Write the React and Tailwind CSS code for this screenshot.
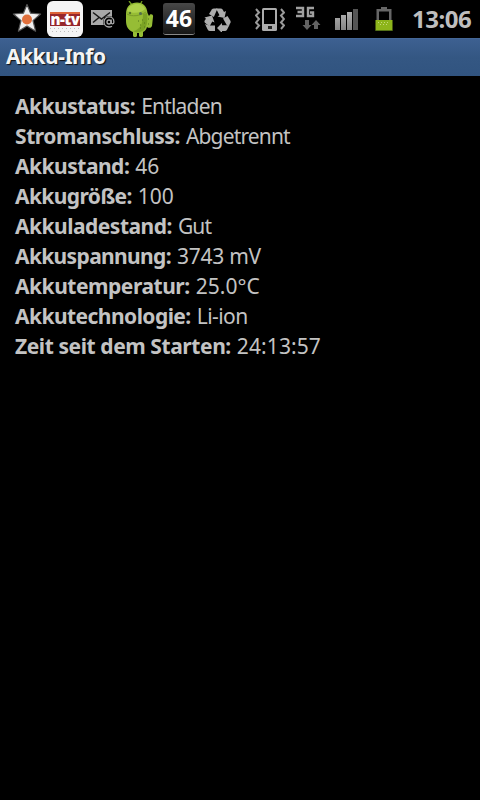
import React from 'react';

const rows = [
  { label: 'Akkustatus:', value: 'Entladen', labelClass: 'tracking-[-0.5px]', valueClass: 'tracking-[-0.8px]' },
  { label: 'Stromanschluss:', value: 'Abgetrennt', labelClass: 'tracking-[-0.43px]', valueClass: 'tracking-[-0.85px]' },
  { label: 'Akkustand:', value: '46', labelClass: 'tracking-[-0.5px]', valueClass: 'tracking-normal' },
  { label: 'Akkugröße:', value: '100', labelClass: 'tracking-[-0.6px]', valueClass: 'tracking-normal' },
  { label: 'Akkuladestand:', value: 'Gut', labelClass: 'tracking-[-0.5px]', valueClass: 'tracking-[-0.9px]' },
  { label: 'Akkuspannung:', value: '3743 mV', labelClass: 'tracking-[-0.65px]', valueClass: 'tracking-[-0.25px]' },
  { label: 'Akkutemperatur:', value: '25.0°C', labelClass: 'tracking-[-0.47px]', valueClass: 'tracking-[0.05px]' },
  { label: 'Akkutechnologie:', value: 'Li-ion', labelClass: 'tracking-[-0.55px]', valueClass: 'tracking-[-0.55px]' },
  { label: 'Zeit seit dem Starten:', value: '24:13:57', labelClass: 'tracking-[-0.42px]', valueClass: 'tracking-[0.1px]' },
];

const StarIcon = () => (
  <svg className="h-[30px] w-[30px]" viewBox="0 0 30 30">
    <path d="M15 1.5l3.600 8.700 10 .8-7.600 6.600 2.600 10.600L15 23l-8.600 5.200L9 17.600 1.400 11l10-.8z" fill="#f0f0f0" stroke="#555" strokeWidth="1.2" strokeLinejoin="round" />
    <circle cx="15" cy="16.500" r="5" fill="#e0703c" />
  </svg>
);

const NtvIcon = () => (
  <div className="h-9 w-9 overflow-hidden rounded-md bg-[#f4f4f4] pt-[11px]">
    <div className="mx-[3px] flex h-[14px] items-center justify-center border-t-2 border-[#dd6338] bg-[#96262b] text-[15px] leading-[12px] font-black tracking-[-0.5px] whitespace-nowrap text-white">
      <span className="-mt-[2px]">n-tv</span>
    </div>
    <svg className="ml-[3px] block h-[8px] w-[30px]" viewBox="0 0 30 8">
      <path d="M0 2.500h30M2 5.500h28" stroke="#bdbdbd" strokeDasharray="1 3" />
    </svg>
  </div>
);

const MailIcon = () => (
  <svg className="h-5 w-6" viewBox="0 0 24 20">
    <path d="M0 1h21v15H0z" fill="#a9a9a9" />
    <path d="M2 3.5l8.5 6.5L19 3.500M2 13.500l6-5M13 8.500l3 2" fill="none" stroke="#191919" strokeWidth="1.500" />
    <circle cx="18" cy="13" r="6" fill="#000" />
    <circle cx="18" cy="13" r="2" fill="none" stroke="#aaa" strokeWidth="1.3" />
    <path d="M20.2 10.5v3c0 2 2.7 1.8 2.7-.6 0-3-2.2-5-4.9-5s-5 2.200-5 5.100 2.300 5 5 5c1.200 0 2.200-.3 3-.8" fill="none" stroke="#aaa" strokeWidth="1.3" />
  </svg>
);

const DroidIcon = () => (
  <svg className="h-9 w-[29px]" viewBox="0 0 29 36">
    <path d="M4 0l3 4M17 0l-2 4" stroke="#6f9a1e" strokeWidth="1.300" />
    <path d="M1 13C1 5 6 1.500 12 1.500c6 0 10 4 10.500 10.500l1.500 3 1-1.500c2-1 3.500.5 3 2.500l-1 9c-1 2-3 2.500-5 1-1 3-2 4-4 5v3.500c0 2-4 2-4 0V32h-2v2.500c0 2-4 2-4 0V31C3 29 1 25 1 20z" fill="#96bd35" />
    <path d="M2 10c2-5 5-7 10-7 4 0 7 2 8 5-3 4-12 5-18 2z" fill="#aed04b" />
    <path d="M22 12c1 8 0 13-3 17-4 3-8 3-11 1 7-1 10-7 10-17z" fill="#7ba324" />
    <path d="M2 13c5 3 13 2 19-2" fill="none" stroke="#7a9b29" />
    <circle cx="5" cy="12" r="1.200" fill="#56732c" />
    <circle cx="15.500" cy="12.500" r="1.500" fill="#53704d" />
    <path d="M13 20h1m3-1h1m-3 5h1m3-2h1m3-4h1m-9 9h1m3-1h1m3-3h1" stroke="#53751a" />
  </svg>
);

const RecycleIcon = () => (
  <svg className="h-6 w-[27px]" viewBox="0 0 27 24">
    <g fill="#adadad">
      <path d="M5 6L7.800 1.500Q8.500.5 10 .5h3.500L9.800 9z" />
      <path d="M12 .5h4.500q1.500 0 2.300 1.300l1.200 2.200 2-1-1.500 7-7-1.500 2-1.200z" />
      <path d="M.5 9.500l7.500-2 2.500 7-2.200-1L5.500 18.500.700 14.500q-.6-1 0-2l1.300-1.800z" />
      <path d="M1 16l4 1.500h6V23H6q-1.500 0-2.200-1.300z" />
      <path d="M19 10.500l4.500-2.600 2.900 4.800q.6 1.200 0 2.300-1 2.500-3.400 2.500z" />
      <path d="M13 20l5-5v2.300h5q2.300 0 3-1.300l-3 5.700q-.7 1.200-2 1.200h-3V25z" />
    </g>
  </svg>
);

const VibrateIcon = () => (
  <svg className="h-6 w-[30px]" viewBox="0 0 30 24">
    <path d="M7 1.500Q7 0 8.500 0h12Q22 0 22 1.500v20q0 1.500-1.500 1.500h-12Q7 23 7 21.500z" fill="#acacac" />
    <path d="M9 2h11v14H9z" fill="#000" />
    <path d="M13 18h4v3h-4z" fill="#222" />
    <path d="M1 1l3 3.500-3 3L4 11l-3 3.500 3 3L1 21M26 1l3 3.500-3 3 3 3.500-3 3.500 3 3-3 3.500" fill="none" stroke="#9a9a9a" strokeWidth="2" />
  </svg>
);

const DataIcon = () => (
  <svg className="h-6 w-[25px]" viewBox="0 0 25 24">
    <path d="M0 2h7v8H0M1.500 6h6M18 2h-6v8h5V6.500h-3" fill="none" stroke="#a0a0a0" strokeWidth="2.400" />
    <path d="M9 14h4v5h2.500L11 24l-4.500-5H9zM18 23h4v-4h2.500L20 14l-4.500 5H18z" fill="#626262" />
  </svg>
);

const SignalIcon = () => (
  <svg className="h-[22px] w-6" viewBox="0 0 24 22">
    <defs>
      <linearGradient id="bar" x1="0" x2="0" y1="0" y2="1">
        <stop offset="0" stopColor="#b0b0b0" />
        <stop offset="1" stopColor="#858585" />
      </linearGradient>
    </defs>
    <path d="M0 9h5v12H0zM6 6h5v15H6zM12 3h5v18h-5z" fill="url(#bar)" />
    <path d="M18 0h5v21h-5z" fill="#555" />
  </svg>
);

const BatteryIcon = () => (
  <svg className="h-[25px] w-[18px]" viewBox="0 0 18 25">
    <path d="M6 0h6v2h4.500v11h-15V2H6z" fill="#666" />
    <path d="M4 4.500h10V13H4z" fill="#000" />
    <path d="M.5 13h17v10.500H.5z" fill="#8db51b" />
    <path d="M3 15.500h12M5 17.500h9" stroke="#c3d978" strokeDasharray="1 2" />
    <path d="M.5 23.500h17" stroke="#547018" />
  </svg>
);

const StatusBar = () => (
  <div className="flex h-[38px] items-start bg-black">
    <div className="ml-3 pt-[3px]"><StarIcon /></div>
    <div className="ml-[5px] pt-px"><NtvIcon /></div>
    <div className="ml-2 pt-[9px]"><MailIcon /></div>
    <div className="ml-[10px] pt-px"><DroidIcon /></div>
    <div className="ml-[9px] pt-[3px]">
      <div className="flex h-8 w-8 items-center justify-center rounded-[3px] border-b border-[#888] bg-linear-to-b from-[#484848] to-[#161616] text-[23px] leading-none font-bold text-white">
        <span className="-mt-px">46</span>
      </div>
    </div>
    <div className="ml-[9px] pt-2"><RecycleIcon /></div>
    <div className="ml-6 pt-2"><VibrateIcon /></div>
    <div className="ml-[11px] pt-[6px]"><DataIcon /></div>
    <div className="ml-[14px] pt-[9px]"><SignalIcon /></div>
    <div className="ml-4 pt-[7px]"><BatteryIcon /></div>
    <div className="ml-[19px] pt-[2px] text-[24px] leading-[34px] font-bold tracking-[-0.5px] whitespace-nowrap text-[#bebebe]">13:06</div>
  </div>
);

const App = () => {
  return (
    <div className="h-[800px] w-[480px] overflow-hidden bg-black font-['Noto_Sans','Open_Sans',sans-serif]">
      <StatusBar />

      {/* Title bar */}
      <div className="h-[38px] border-t border-[#446797] bg-linear-to-b from-[#3d6091] via-[#345783] to-[#315480] pl-[6px]">
        <h1 className="text-[21px] leading-[35px] font-bold tracking-[-0.5px] text-[#f4f4f4] [text-shadow:1px_1px_1px_#111]">Akku-Info</h1>
      </div>

      {/* Battery values */}
      <div className="pt-[15px] pl-[15px] text-[21px] leading-[30px] text-[#c3c3c3]">
        {rows.map((row) => (
          <div key={row.label} className="flex gap-[6px] whitespace-nowrap">
            <span className={`font-bold ${row.labelClass}`}>{row.label}</span>
            <span className={row.valueClass}>{row.value}</span>
          </div>
        ))}
      </div>
    </div>
  );
};

export default App;
